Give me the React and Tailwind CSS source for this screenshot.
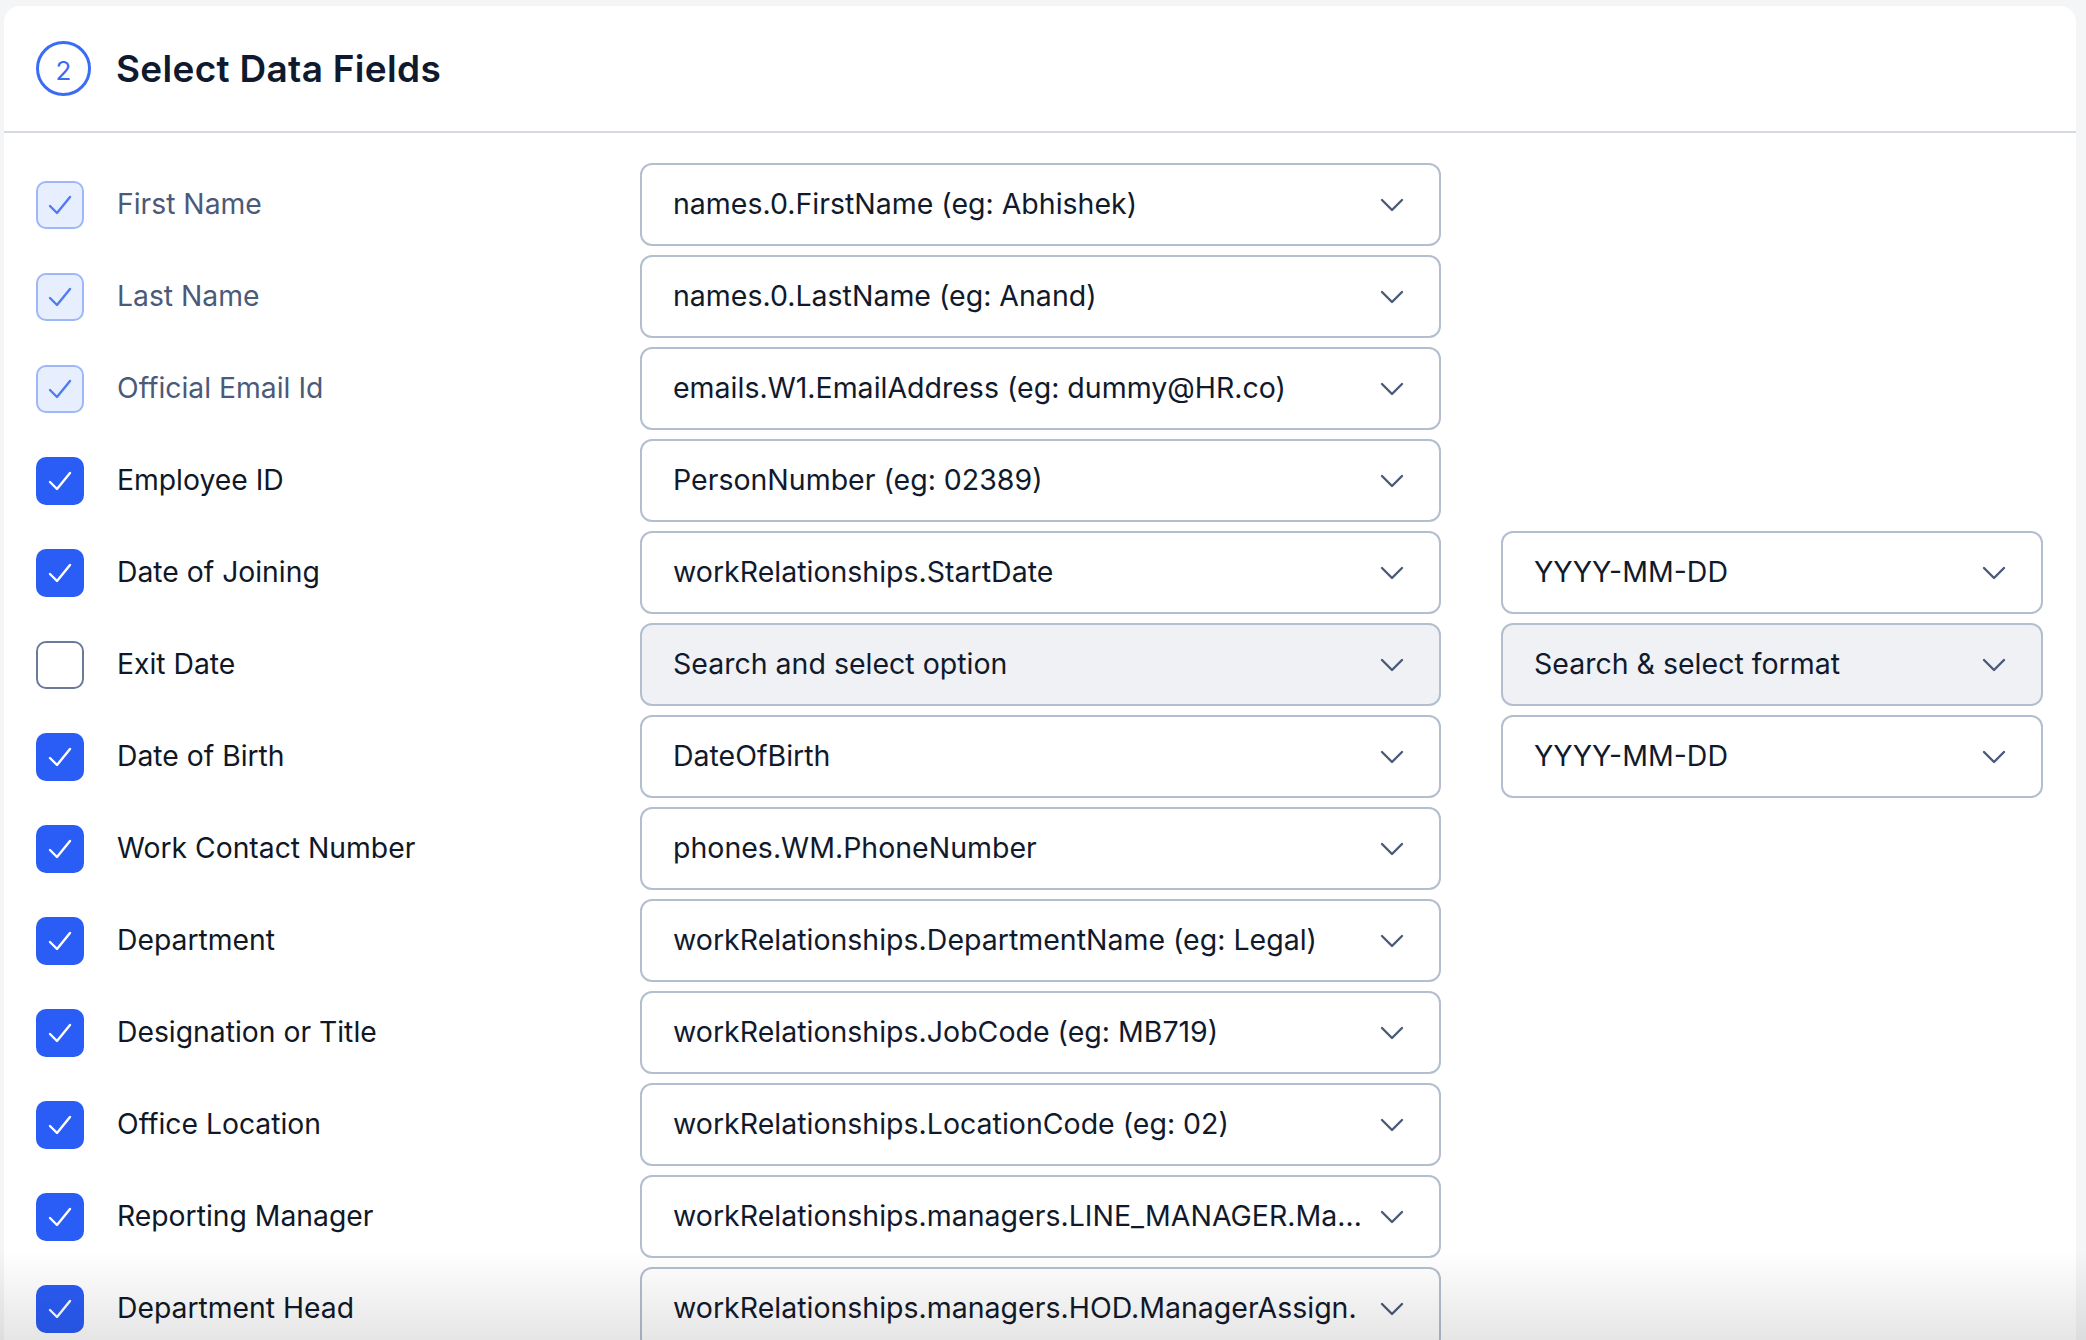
import React from "react";

const rows = [
  { label: "First Name", state: "locked", value: "names.0.FirstName (eg: Abhishek)" },
  { label: "Last Name", state: "locked", value: "names.0.LastName (eg: Anand)" },
  { label: "Official Email Id", state: "locked", value: "emails.W1.EmailAddress (eg: dummy@HR.co)" },
  { label: "Employee ID", state: "on", value: "PersonNumber (eg: 02389)" },
  { label: "Date of Joining", state: "on", value: "workRelationships.StartDate", format: "YYYY-MM-DD" },
  { label: "Exit Date", state: "off", value: "", placeholder: "Search and select option", format: "", formatPlaceholder: "Search & select format" },
  { label: "Date of Birth", state: "on", value: "DateOfBirth", format: "YYYY-MM-DD" },
  { label: "Work Contact Number", state: "on", value: "phones.WM.PhoneNumber" },
  { label: "Department", state: "on", value: "workRelationships.DepartmentName (eg: Legal)" },
  { label: "Designation or Title", state: "on", value: "workRelationships.JobCode (eg: MB719)" },
  { label: "Office Location", state: "on", value: "workRelationships.LocationCode (eg: 02)" },
  { label: "Reporting Manager", state: "on", value: "workRelationships.managers.LINE_MANAGER.ManagerAssignmentNumber" },
  { label: "Department Head", state: "on", value: "workRelationships.managers.HOD.ManagerAssign." },
];

const Check = ({ color }) => (
  <svg width="26" height="22" viewBox="0 0 26 22" fill="none">
    <polyline points="3,12 10,19 23,3" stroke={color} strokeWidth="2.4" strokeLinecap="round" strokeLinejoin="round" />
  </svg>
);

const Chevron = () => (
  <svg width="24" height="14" viewBox="0 0 24 14" fill="none" className="shrink-0">
    <polyline points="2,2 12,12 22,2" stroke="#4a5a78" strokeWidth="2.4" strokeLinecap="round" strokeLinejoin="round" />
  </svg>
);

const Checkbox = ({ state }) => {
  if (state === "locked") {
    return (
      <div className="w-[48px] h-[48px] shrink-0 rounded-[10px] border-[2.5px] border-[#9db7f8] bg-[#e7eefd] flex items-center justify-center">
        <Check color="#4f7cf2" />
      </div>
    );
  }
  if (state === "on") {
    return (
      <div className="w-[48px] h-[48px] shrink-0 rounded-[10px] bg-[#2a5cf6] flex items-center justify-center">
        <Check color="#ffffff" />
      </div>
    );
  }
  return <div className="w-[48px] h-[48px] shrink-0 rounded-[10px] border-[2.5px] border-[#6b7a99] bg-white" />;
};

const Select = ({ value, placeholder, className }) => (
  <div
    className={`h-[83px] shrink-0 rounded-[12px] border-2 border-[#b3bece] flex items-center justify-between gap-[16px] pl-[31px] pr-[35px] ${
      value ? "bg-white" : "bg-[#eff1f5]"
    } ${className}`}
  >
    <span className="truncate text-[28.5px] text-[#111a2c]">{value || placeholder}</span>
    <Chevron />
  </div>
);

export default function App() {
  return (
    <div className="relative h-[1340px] overflow-hidden bg-[#f4f5f7] pt-[6px] pl-[4px] font-['Inter',sans-serif]">
      <div className="w-[2072px] rounded-t-[16px] bg-white">
        {/* header */}
        <div className="h-[127px] flex items-center gap-[25px] px-[32px] border-b-2 border-[#d5d9e2]">
          <div className="w-[55px] h-[55px] rounded-full border-[3px] border-[#3b6cf4] flex items-center justify-center">
            <span className="text-[26px] text-[#3b6cf4] leading-none mt-[4px]">2</span>
          </div>
          <h1 className="text-[37px] font-semibold text-[#0f1a2e] tracking-[0.3px]">Select Data Fields</h1>
        </div>

        {/* field rows */}
        <div className="flex flex-col gap-[9px] pt-[30px] pl-[32px]">
          {rows.map((row) => (
            <div key={row.label} className="flex items-center">
              <div className="w-[604px] shrink-0 flex items-center gap-[33px]">
                <Checkbox state={row.state} />
                <span className={`text-[28.3px] ${row.state === "locked" ? "text-[#4b5a78]" : "text-[#101828]"}`}>{row.label}</span>
              </div>
              <Select value={row.value} placeholder={row.placeholder} className="w-[801px]" />
              {row.format !== undefined && (
                <Select value={row.format} placeholder={row.formatPlaceholder} className="w-[542px] ml-[60px]" />
              )}
            </div>
          ))}
        </div>
      </div>

      {/* bottom scroll fade */}
      <div className="pointer-events-none absolute left-0 right-0 bottom-0 h-[90px] bg-gradient-to-b from-transparent to-black/10" />
    </div>
  );
}
